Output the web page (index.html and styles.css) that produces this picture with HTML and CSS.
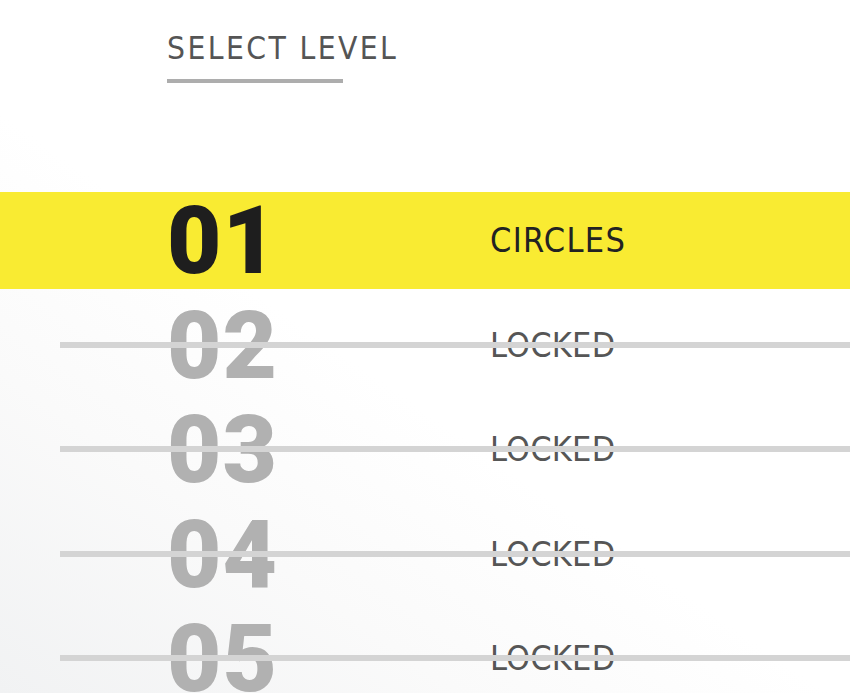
FILE: index.html
```html
<!DOCTYPE html>
<html lang="en">
<head>
<meta charset="utf-8">
<title>Select Level</title>
<link rel="stylesheet" href="styles.css">
</head>
<body>
<main class="screen">
  <header class="heading">
    <h1 class="title">SELECT LEVEL</h1>
    <div class="title-bar"></div>
  </header>
  <ol class="levels">
    <li class="level level-active"><span class="num">01</span><span class="name">CIRCLES</span></li>
    <li class="level level-locked"><span class="num">02</span><span class="name">LOCKED</span></li>
    <li class="level level-locked"><span class="num">03</span><span class="name">LOCKED</span></li>
    <li class="level level-locked"><span class="num">04</span><span class="name">LOCKED</span></li>
    <li class="level level-locked"><span class="num">05</span><span class="name">LOCKED</span></li>
  </ol>
</main>
</body>
</html>
```

FILE: styles.css
```css
html, body {
  margin: 0;
  padding: 0;
  height: 100%;
  overflow: hidden;
}

body {
  background: linear-gradient(35deg, #f1f2f3 0%, #fafafa 25%, #ffffff 45%, #ffffff 100%);
  font-family: "DejaVu Sans Condensed", "DejaVu Sans", sans-serif;
  font-stretch: condensed;
}

.screen {
  display: flex;
  flex-direction: column;
  padding-top: 33px;
}

.heading {
  display: flex;
  flex-direction: column;
  align-items: flex-start;
  padding-left: 167px;
}

.title {
  margin: 0;
  font-size: 31.5px;
  line-height: 1;
  font-weight: normal;
  letter-spacing: 2.4px;
  color: #555555;
}

.title-bar {
  margin-top: 14px;
  width: 176px;
  height: 4px;
  background: #adadad;
}

.levels {
  list-style: none;
  margin: 109px 0 0 0;
  padding: 0;
  display: flex;
  flex-direction: column;
  gap: 7.6px;
}

.level {
  position: relative;
  height: 97px;
  display: flex;
  align-items: center;
  padding-left: 167px;
}

.num {
  width: 323px;
  font-family: Roboto, "DejaVu Sans", sans-serif;
  font-stretch: normal;
  font-size: 94px;
  line-height: 1;
  font-weight: 900;
  letter-spacing: 1px;
  padding-top: 2px;
}

.name {
  font-size: 34px;
  line-height: 1;
  letter-spacing: 0.7px;
}

.level-active {
  background: #f9eb32;
}

.level-active .num {
  color: #1e1e1e;
}

.level-active .name {
  color: #222222;
  letter-spacing: 1.3px;
}

.level-locked .num {
  color: #b1b1b1;
}

.level-locked .name {
  color: #565656;
  letter-spacing: 0.2px;
}

.level-locked::after {
  content: "";
  position: absolute;
  left: 60px;
  right: 0;
  top: 50%;
  height: 6px;
  margin-top: -3px;
  background: #d4d4d4;
}
```
